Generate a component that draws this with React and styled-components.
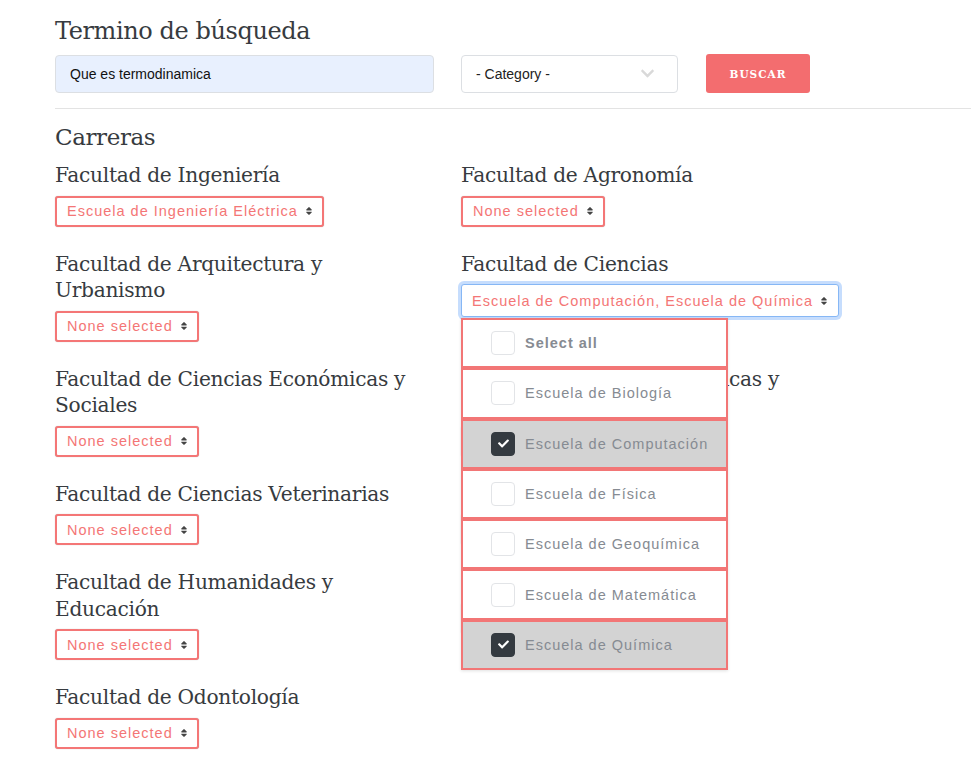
import styled, { createGlobalStyle } from 'styled-components';
import { FaSort, FaCheck, FaChevronDown } from 'react-icons/fa';

const GlobalStyle = createGlobalStyle`
  * { box-sizing: border-box; }
  body {
    margin: 0;
    background: #fff;
    font-family: "Liberation Sans", Arial, sans-serif;
    overflow: hidden;
  }
`;

const Page = styled.div`
  padding: 16px 0 0 55px;
`;

const Title = styled.h2`
  margin: ${(p) => p.mt || 0}px 0 0;
  font-family: "DejaVu Serif", serif;
  font-weight: normal;
  font-size: ${(p) => p.size || 22}px;
  line-height: ${(p) => p.lh || 30}px;
  letter-spacing: -0.4px;
  color: #373b40;
`;

const SearchRow = styled.div`
  display: flex;
  align-items: center;
  margin-top: 8px;
`;

const SearchInput = styled.div`
  width: 379px;
  height: 38px;
  padding: 0 14px;
  display: flex;
  align-items: center;
  background: #e8f0fe;
  border: 1px solid #dcdfe3;
  border-radius: 4px;
  font-size: 14px;
  color: #111;
`;

const CategorySelect = styled.div`
  width: 217px;
  height: 38px;
  margin-left: 27px;
  padding: 0 22px 0 14px;
  display: flex;
  align-items: center;
  justify-content: space-between;
  border: 1px solid #dcdfe3;
  border-radius: 4px;
  font-size: 14px;
  color: #222;
`;

const BuscarButton = styled.button`
  width: 104px;
  height: 39px;
  margin-left: 28px;
  border: none;
  border-radius: 3px;
  background: #f36d6f;
  color: #fff;
  font-family: "DejaVu Serif", serif;
  font-weight: bold;
  font-size: 10.5px;
  letter-spacing: 1px;
`;

const Divider = styled.hr`
  margin: 15px 0 14px;
  border: none;
  border-top: 1px solid #e3e3e3;
`;

const Grid = styled.div`
  display: grid;
  grid-template-columns: 372px 372px;
  column-gap: 34px;
  margin-top: 11px;
`;

const Cell = styled.div`
  padding-bottom: 24px;
`;

const FacultyName = styled.h3`
  margin: 0 0 7px;
  font-family: "DejaVu Serif", serif;
  font-weight: normal;
  font-size: 20.2px;
  line-height: 26.5px;
  letter-spacing: -0.3px;
  color: #373b40;
`;

const SelectWrap = styled.div`
  position: relative;
  display: flex;
`;

const MultiButton = styled.div`
  display: flex;
  align-items: center;
  gap: 6px;
  height: ${(p) => (p.focused ? 33 : 31)}px;
  padding: 0 ${(p) => (p.focused ? 9 : 8)}px 0 10px;
  border: ${(p) => (p.focused ? '1px solid #86b7f5' : '2px solid #f47676')};
  box-shadow: ${(p) => (p.focused ? '0 0 0 3px rgba(128, 180, 250, 0.45)' : '0 0 1px rgba(0,0,0,0.3)')};
  border-radius: 3px;
  background: #fff;
  color: #f47676;
  font-size: 14.5px;
  letter-spacing: 1px;
  white-space: nowrap;

  svg {
    color: #444;
    font-size: 10px;
  }
`;

const Dropdown = styled.ul`
  position: absolute;
  left: 0;
  top: calc(100% + 1px);
  width: 267px;
  margin: 0;
  padding: 0;
  list-style: none;
  z-index: 5;
  box-shadow: 0 1px 3px rgba(0, 0, 0, 0.12);
`;

const Option = styled.li`
  height: 50.3px;
  display: flex;
  align-items: center;
  padding-left: 28px;
  gap: 10px;
  border: 2px solid #f27676;
  background: ${(p) => (p.checked ? '#d3d3d3' : '#fff')};
  color: #868b92;
  font-size: 14.5px;
  letter-spacing: 1px;
  font-weight: ${(p) => (p.bold ? 'bold' : 'normal')};
`;

const Box = styled.span`
  width: 24px;
  height: 24px;
  border-radius: 4px;
  display: flex;
  align-items: center;
  justify-content: center;
  background: ${(p) => (p.checked ? '#343a40' : '#fff')};
  border: 1px solid ${(p) => (p.checked ? '#343a40' : '#e2e4e7')};
  color: #fff;
  font-size: 11px;
`;

const options = [
  { label: 'Select all', bold: true },
  { label: 'Escuela de Biología' },
  { label: 'Escuela de Computación', checked: true },
  { label: 'Escuela de Física' },
  { label: 'Escuela de Geoquímica' },
  { label: 'Escuela de Matemática' },
  { label: 'Escuela de Química', checked: true },
];

const faculties = [
  { name: 'Facultad de Ingeniería', value: 'Escuela de Ingeniería Eléctrica' },
  { name: 'Facultad de Agronomía' },
  { name: 'Facultad de Arquitectura y Urbanismo' },
  { name: 'Facultad de Ciencias', value: 'Escuela de Computación, Escuela de Química', open: true },
  { name: 'Facultad de Ciencias Económicas y Sociales' },
  { name: 'Facultad de Ciencias Jurídicas y Políticas' },
  { name: 'Facultad de Ciencias Veterinarias' },
  { name: 'Facultad de Farmacia' },
  { name: 'Facultad de Humanidades y Educación' },
  { name: 'Facultad de Medicina' },
  { name: 'Facultad de Odontología' },
];

const App = () => (
  <Page>
    <GlobalStyle />
    <Title size={24} lh={30}>Termino de búsqueda</Title>
    <SearchRow>
      <SearchInput>Que es termodinamica</SearchInput>
      <CategorySelect>
        - Category -
        <FaChevronDown color="#d9d9d9" size={15} />
      </CategorySelect>
      <BuscarButton>BUSCAR</BuscarButton>
    </SearchRow>
    <Divider />
    <Title size={23} lh={28} mt={2}>Carreras</Title>
    <Grid>
      {faculties.map((f) => (
        <Cell key={f.name}>
          <FacultyName>{f.name}</FacultyName>
          <SelectWrap>
            <MultiButton focused={f.open}>
              {f.value || 'None selected'}
              <FaSort />
            </MultiButton>
            {f.open && (
              <Dropdown>
                {options.map((o) => (
                  <Option key={o.label} checked={o.checked} bold={o.bold}>
                    <Box checked={o.checked}>{o.checked && <FaCheck />}</Box>
                    {o.label}
                  </Option>
                ))}
              </Dropdown>
            )}
          </SelectWrap>
        </Cell>
      ))}
    </Grid>
  </Page>
);

export default App;
